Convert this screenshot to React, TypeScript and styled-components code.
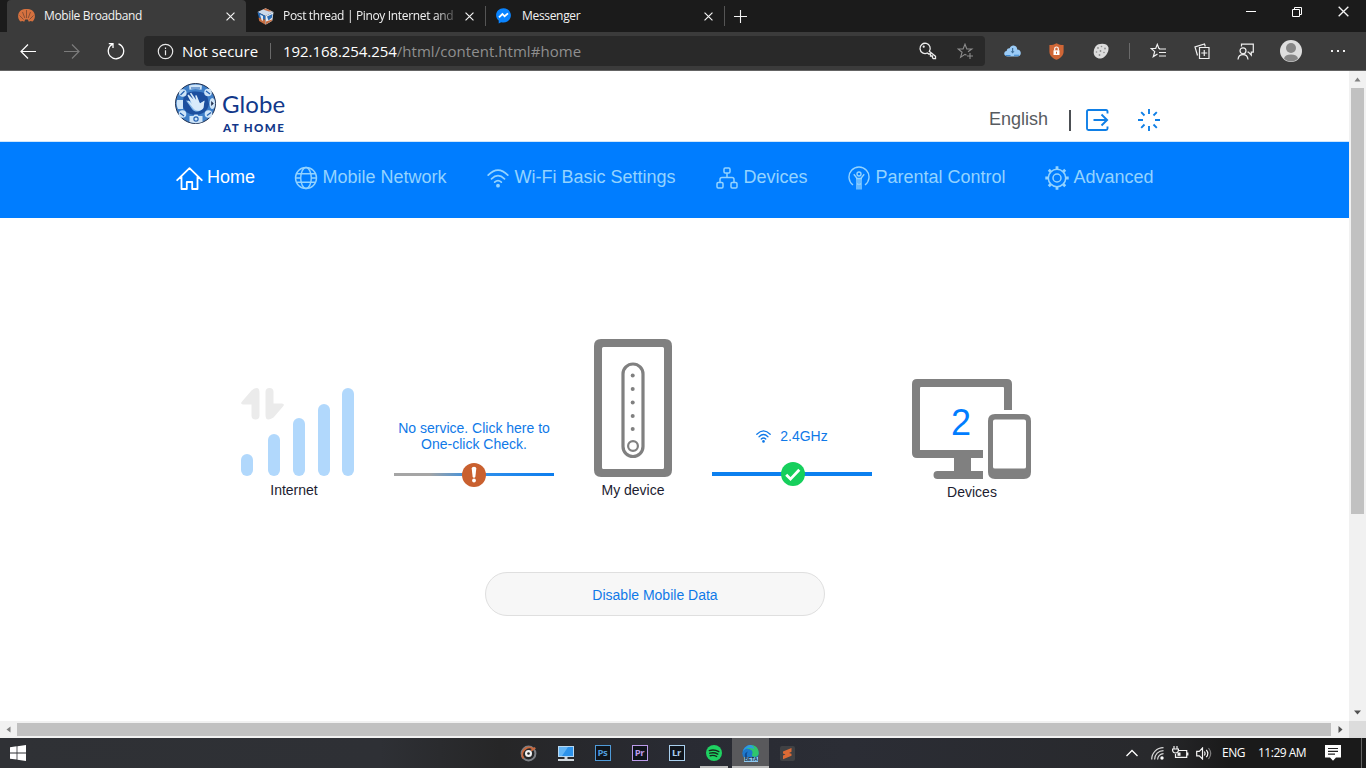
import React from "react";
import styled, { createGlobalStyle } from "styled-components";

const UI = `"Open Sans", "Noto Sans", sans-serif`;
const ARIAL = `"Liberation Sans", Arial, sans-serif`;

const GlobalStyle = createGlobalStyle`
  * { box-sizing: border-box; }
  body { margin: 0; overflow: hidden; background: #fff; }
  svg { display: block; flex: none; }
`;

const Screen = styled.div`
  width: 1366px;
  height: 768px;
  display: flex;
  flex-direction: column;
  overflow: hidden;
  font-family: ${ARIAL};
`;

/* ---------- browser chrome ---------- */

const TabStrip = styled.div`
  height: 32px;
  flex: none;
  display: flex;
  background: #1b1b1b;
  padding-left: 7px;
`;

const TabBox = styled.div<{ $active?: boolean }>`
  width: 239px;
  height: 32px;
  display: flex;
  align-items: center;
  padding: 0 8px 0 11px;
  background: ${(p) => (p.$active ? "#3b3b3b" : "transparent")};
  border-radius: 4px 4px 0 0;
`;

const Favicon = styled.div`
  width: 26px;
  flex: none;
`;

const TabTitle = styled.div<{ $spacing: number; $fade?: boolean }>`
  width: 172px;
  white-space: nowrap;
  font: 12px/20px ${UI};
  letter-spacing: ${(p) => p.$spacing}px;
  color: #f2f2f2;
  mask-image: ${(p) => (p.$fade ? "linear-gradient(90deg, #000 152px, rgba(0,0,0,.2) 172px)" : "none")};
`;

const TabClose = styled.div`
  margin-left: auto;
  width: 16px;
  display: flex;
  justify-content: center;
`;

const TabDivider = styled.div`
  width: 1px;
  height: 20px;
  margin: 6px -1px 0 0;
  background: #555;
`;

const NewTab = styled.div`
  width: 33px;
  display: flex;
  align-items: center;
  justify-content: center;
`;

const WindowButtons = styled.div`
  margin-left: auto;
  height: 23px;
  display: flex;
`;

const Slot = styled.div<{ $w: number }>`
  width: ${(p) => p.$w}px;
  flex: none;
  display: flex;
  align-items: center;
  justify-content: center;
`;

const Toolbar = styled.div`
  height: 39px;
  flex: none;
  display: flex;
  align-items: stretch;
  background: #3b3b3b;
  border-bottom: 1px solid #646464;
  padding-left: 6px;
`;

const AddressBar = styled.div`
  width: 841px;
  height: 30px;
  margin: 4px 6px 0 6px;
  flex: none;
  display: flex;
  align-items: center;
  background: #292929;
  border-radius: 4px;
  padding-left: 13px;
  font: 15px/28px ${UI};
  color: #fff;
  white-space: nowrap;
`;

const SecurityText = styled.div`
  width: 80px;
  margin-left: 8px;
`;

const ToolbarDivider = styled.div`
  width: 1px;
  height: 16px;
  background: #6a6a6a;
`;

const Url = styled.div`
  flex: 1;
  margin-left: 4px;
  letter-spacing: -0.07px;
  span { color: #8f8f8f; letter-spacing: 0.05px; }
`;

/* ---------- page viewport ---------- */

const Viewport = styled.div`
  flex: 1;
  min-height: 0;
  display: grid;
  grid-template-columns: 1349px 17px;
  grid-template-rows: 650px 17px;
`;

const Page = styled.div`
  display: flex;
  flex-direction: column;
  background: #fff;
  overflow: hidden;
`;

const ScrollV = styled.div`
  background: #f1f1f1;
  display: flex;
  flex-direction: column;
  align-items: center;
`;

const ScrollH = styled.div`
  background: #f1f1f1;
  display: flex;
  align-items: center;
`;

const Corner = styled.div`
  background: #dcdcdc;
`;

const ScrollArrow = styled.div`
  width: 17px;
  height: 17px;
  display: flex;
  align-items: center;
  justify-content: center;
`;

const ThumbV = styled.div`
  width: 13px;
  height: 426px;
  margin-bottom: auto;
  background: #c1c1c1;
`;

const ThumbH = styled.div`
  width: 1314px;
  height: 13px;
  margin-right: auto;
  background: #c1c1c1;
`;

const Header = styled.header`
  height: 71px;
  flex: none;
  display: flex;
  padding: 12px 189px 0 175px;
  border-bottom: 1px solid #cfe6fb;
`;

const Wordmark = styled.div`
  margin: 7px 0 0 6px;
  color: #12388a;
  font-family: Lato, sans-serif;
  white-space: nowrap;
`;

const BrandName = styled.div`
  font-size: 24px;
  line-height: 28px;
  letter-spacing: 0.1px;
  font-weight: 400;
`;

const BrandSub = styled.div`
  margin-top: 2px;
  padding-left: 1px;
  font-size: 11.5px;
  line-height: 16px;
  font-weight: 900;
  letter-spacing: 1.4px;
`;

const HeaderTools = styled.div`
  margin: 26px 0 0 auto;
  height: 22px;
  display: flex;
  align-items: center;
`;

const Language = styled.div`
  font-size: 18px;
  line-height: 20px;
  color: #575b60;
  margin: -2px 21px 0 0;
`;

const HeaderDivider = styled.div`
  width: 2px;
  height: 21px;
  margin-right: 15px;
  background: #4c4f54;
`;

const LogoutWrap = styled.div`
  margin-right: 29px;
`;

const Nav = styled.nav`
  height: 76px;
  flex: none;
  display: flex;
  background: #007dff;
  padding-left: 176px;
`;

const NavItem = styled.div<{ $w: number; $active?: boolean }>`
  width: ${(p) => p.$w}px;
  height: 72px;
  display: flex;
  align-items: center;
  color: ${(p) => (p.$active ? "#fff" : "#93d3ff")};
`;

const NavText = styled.div<{ $gap: number }>`
  margin: -2px 0 0 ${(p) => p.$gap}px;
  font-size: 18px;
  line-height: 20px;
  white-space: nowrap;
`;

const Content = styled.main`
  flex: 1;
  display: flex;
  flex-direction: column;
`;

const StatusRow = styled.section`
  height: 283px;
  padding: 0 0 0 214px;
  display: flex;
  align-items: flex-end;
`;

const Station = styled.div<{ $w: number; $lift?: number }>`
  width: ${(p) => p.$w}px;
  margin-bottom: ${(p) => p.$lift ?? 0}px;
  display: flex;
  flex-direction: column;
  align-items: center;
`;

const StationLabel = styled.div<{ $gap: number }>`
  margin-top: ${(p) => p.$gap}px;
  font-size: 14px;
  line-height: 16px;
  color: #1c1c30;
`;

const SignalWrap = styled.div`
  padding-left: 8px;
`;

const DevicesArt = styled.div`
  position: relative;
  margin-right: 2px;
`;

const DeviceCount = styled.div`
  position: absolute;
  left: 0;
  top: 23px;
  width: 99px;
  text-align: center;
  font-size: 36px;
  line-height: 42px;
  color: #007dff;
`;

const Link = styled.div<{ $mx: string; $lift: number }>`
  width: 160px;
  margin: ${(p) => `0 ${p.$mx} ${p.$lift}px`};
  display: flex;
  flex-direction: column;
  align-items: center;
`;

const LinkText = styled.div<{ $gap: number }>`
  display: flex;
  align-items: center;
  gap: 9px;
  margin-bottom: ${(p) => p.$gap}px;
  font-size: 14px;
  line-height: 16px;
  text-align: center;
  white-space: nowrap;
  color: #0f79e8;
`;

const LinkLine = styled.div<{ $bg: string; $h: number }>`
  width: 160px;
  height: 24px;
  display: flex;
  justify-content: center;
  background: ${(p) => p.$bg} 0 10px / 100% ${(p) => p.$h}px no-repeat;
`;

const DataButton = styled.button`
  width: 340px;
  height: 44px;
  margin: 71px 0 0 485px;
  padding: 2px 0 0;
  border: 1px solid #dfdfdf;
  border-radius: 22px;
  background: #f7f7f7;
  font: 14px/16px ${ARIAL};
  color: #0f79e8;
`;

/* ---------- taskbar ---------- */

const Taskbar = styled.div`
  height: 30px;
  flex: none;
  display: flex;
  color: #fff;
  background: linear-gradient(90deg, #2f3135 0, #2e3035 380px, #262627 500px, #292b33 680px, #2b2d35 850px, #28292c 1150px, #1a1a1a 1230px, #1a1a1a 100%);
`;

const TaskItem = styled.div<{ $state?: "open" | "active" }>`
  width: 37px;
  height: 30px;
  display: flex;
  align-items: center;
  justify-content: center;
  background: ${(p) => (p.$state === "active" ? "#59595c" : "transparent")};
  background-image: ${(p) => (p.$state ? "linear-gradient(#bdbdbd, #bdbdbd)" : "none")};
  background-repeat: no-repeat;
  background-size: ${(p) => (p.$state === "active" ? "100% 2px" : "28px 2px")};
  background-position: bottom center;
`;

const StartButton = styled(TaskItem)`
  width: 36px;
  margin-right: 474px;
`;

const Tray = styled.div`
  margin-left: auto;
  width: 246px;
  display: flex;
  align-items: center;
`;

const TrayText = styled.div<{ $w: number; $spacing: number; $gap?: number }>`
  width: ${(p) => p.$w}px;
  margin-left: ${(p) => p.$gap ?? 0}px;
  flex: none;
  font: 12px/28px ${UI};
  letter-spacing: ${(p) => p.$spacing}px;
  white-space: nowrap;
`;

const DesktopEdge = styled.div`
  width: 1px;
  height: 30px;
  margin-left: 20px;
  background: #636363;
`;

/* ---------- drawings ---------- */

const stroke = (w = 1.2, color = "currentColor") => ({
  fill: "none",
  stroke: color,
  strokeWidth: w,
});

const Cross = ({ size = 9, w = 1.3 }: { size?: number; w?: number }) => (
  <svg width={size} height={size} viewBox="0 0 10 10" {...stroke(w, "#f4f4f4")}>
    <path d="M.6.6 9.4 9.4M9.4.6.6 9.4" />
  </svg>
);

const HuaweiIcon = () => (
  <svg width="17" height="14" viewBox="0 0 17 14">
    <path fill="#d5713f" d="M3 1.2C5.500 -.4 11.500 -.4 14 1.200c2 1.300 3 4 2.900 6.300-.1 2-.9 3.700-2.400 5l-2-.6-1.700.8-1-2.200h-2.600l-1 2.200-1.700-.8-2 .6C1 11.200.2 9.500.1 7.500 0 5.200 1 2.500 3 1.200z" />
    <path stroke="#55392e" strokeWidth=".6" fill="none" d="M8.500 9V1M6.800 9 4.500 3M10.200 9 12.500 3M5.500 10.500 1.500 6.500M11.500 10.500l4-4" />
  </svg>
);

const CubeIcon = () => (
  <svg width="17" height="17" viewBox="0 0 17 17">
    <path fill="#ccd9ea" d="M8.500.3 16.500 4 8.500 8 .5 4z" />
    <path fill="#c66e42" d="M6 1.500 9 .4l6 2.800-3 .4z" />
    <path fill="#276bb8" d="M.5 4l8 4v4L2 9.800z" />
    <path fill="#c66e42" d="m1.500 9.600 7 2.400v4.700l-6.300-3.700z" />
    <path fill="#dfe7f0" d="m3 6.500 3 1.400v5L4.500 12z" />
    <path fill="#e5ecf4" d="M16.500 4 8.500 8v8.700l6.800-4z" />
    <path fill="#2d6db5" d="m10 8.500 5.500-2.500-.5 3.500-3.500 3z" />
    <path fill="#c66e42" d="m9 13.500 6-2-.2 1.500L9 16.300z" />
  </svg>
);

const MessengerIcon = () => (
  <svg width="15" height="16" viewBox="0 0 15 16">
    <path fill="#0a84ff" d="M7.500.3C3.300.3.1 3.300.1 7.200c0 2.200 1 4 2.600 5.300v3.100l2.500-1.400c.7.200 1.500.3 2.300.3 4.200 0 7.400-3.200 7.400-7.200S11.700.3 7.500.3z" />
    <path fill="none" stroke="#fff" strokeWidth="1.800" d="M3 9.300 6.400 6l2.200 2.300L12 5.400" />
  </svg>
);

const KeyIcon = () => (
  <svg width="18" height="18" viewBox="0 0 18 18" {...stroke(1.3, "#ededed")}>
    <path d="M10.300 9.300A5.100 5.100 0 1 0 8.300 11l1.500 1h1.700v2h2v1.800l.8.900h2.200v-2.500z" />
    <circle cx="4.700" cy="4.700" r="1.100" fill="#ededed" stroke="none" />
  </svg>
);

const StarPlusIcon = () => (
  <svg width="17" height="17" viewBox="0 0 17 17" {...stroke(1.1, "#8d8d8d")}>
    <path d="M11 8.700 14.800 6h-5L8 1.200 6.100 6h-5l4 3.200-1.500 5L8 11.300l1.500 1M13 10v6M10 13h6" />
  </svg>
);

const CloudIcon = () => (
  <svg width="17" height="12" viewBox="0 0 17 12">
    <path fill="#9bcbf6" d="M3.600 11.500C1.500 11.500.2 10.300.2 8.600c0-1.500 1-2.500 2.400-2.700C3 3.500 4.600 3 5.700 3.300 6.500 1.300 8 .4 9.700.6c2.300.2 3.500 1.900 3.500 4 2.200.2 3.600 1.500 3.600 3.500 0 2-1.400 3.400-3.400 3.400z" />
    <path fill="#3f6f9b" d="M8 3h1.200v3.300h1.300L8.600 8.500 6.700 6.300H8z" />
    <path fill="#3b86cf" d="M1.500 10h5v1h-5zM10 9.700h5v1h-5z" />
  </svg>
);

const ShieldIcon = () => (
  <svg width="15" height="17" viewBox="0 0 15 17">
    <path fill="#cf6636" d="M7.500.2c2 1.200 4.500 1.900 7.100 1.900v6.400c0 4-3 6.900-7.100 8.300C3.400 15.400.4 12.500.4 8.500V2.100C3 2.100 5.500 1.400 7.500.2z" />
    <path fill="#fff" d="M4.500 7.300h6v4.700h-6z" />
    <path fill="none" stroke="#fff" strokeWidth="1.200" d="M5.700 7.500V5.800a1.800 1.800 0 0 1 3.600 0v1.700" />
    <path fill="#cf6636" d="M7 8.700h1v2H7z" />
  </svg>
);

const CookieIcon = () => (
  <svg width="16" height="16" viewBox="0 0 16 16">
    <path fill="#dcdcdc" d="M5.500 1.200C9 .1 14.500.3 15.400 4.500c.8 4-2.600 9.300-6.500 10.800C4.500 16.500.9 13.500.7 9.800.6 5.800 2.500 2.400 5.500 1.200z" />
    <g fill="#8e8e8e">
      <circle cx="5" cy="5" r=".9" /><circle cx="8.500" cy="3.500" r=".8" /><circle cx="12" cy="5.500" r=".9" />
      <circle cx="3.500" cy="9" r=".8" /><circle cx="7.500" cy="8" r=".9" /><circle cx="11" cy="9.500" r=".8" />
      <circle cx="6.500" cy="12" r=".9" />
    </g>
  </svg>
);

const FavoritesIcon = () => (
  <svg width="17" height="16" viewBox="0 0 17 16" {...stroke(1.2, "#f0f0f0")}>
    <path d="M10 5.500H8.900L7.300 1.400 5.700 5.500H1.200l3.500 3.100-1.400 5L7.500 11M9 6h7M9 9.500h7M9 13h7" />
  </svg>
);

const CollectionsIcon = () => (
  <svg width="16" height="17" viewBox="0 0 16 17" {...stroke(1.2, "#f0f0f0")}>
    <path d="M5.500 4.500h9.500v11H5.500zM10.250 7v6M7.250 10h6M3.500 12.500 1 3.800 10.500 1l.8 2.500" />
  </svg>
);

const FeedbackIcon = () => (
  <svg width="17" height="17" viewBox="0 0 17 17" {...stroke(1.2, "#f0f0f0")}>
    <path d="M4.500 3.500V1.200h11.800v8h-2v3L11.500 9.200h-1M1 16.500c.3-3 2-4.900 5-4.900s4.700 1.900 5 4.900" />
    <circle cx="6" cy="7.800" r="3" />
  </svg>
);

const AvatarIcon = () => (
  <svg width="22" height="22" viewBox="0 0 22 22">
    <circle cx="11" cy="11" r="11" fill="#dedede" />
    <circle cx="11" cy="8" r="5" fill="#878787" />
    <path fill="#878787" d="M4 18.500C4.500 15.700 7 14.500 11 14.500s6.500 1.200 7 4C16.200 20.500 13.800 21.500 11 21.500s-5.200-1-7-3z" />
  </svg>
);

const GlobeLogo = () => (
  <svg width="41" height="41" viewBox="0 0 41 41">
    <circle cx="20.500" cy="20.500" r="20" fill="#3f7fc8" stroke="#22304e" />
    <path fill="#1c4f9f" d="M9 12c4-4 17-5 23 0l2 9c-1 7-7 11-13.500 11S8 28 7.500 21z" />
    <g fill="#cfe5f8">
      <path d="M14 2.500c4-1.500 9-1.500 13 0l-.5 4.200c-4-1-8-1-12 0z" />
      <path d="M2 17h6v9H3C1.500 23 1.300 20 2 17z" />
      <circle cx="7.800" cy="10" r="3.800" /><circle cx="33" cy="9.500" r="3.800" />
      <circle cx="7.500" cy="31" r="3.800" /><circle cx="33.500" cy="31" r="3.800" />
      <path d="M14.500 33h4l1-1.500h3l1 1.500h4v6c-4 1.500-9 1.500-13 0z" />
      <ellipse cx="37.300" cy="20.500" rx="2.800" ry="5.500" />
    </g>
    <path fill="#8bbdec" d="M11 17.500 17 26c3 4 9 3 11-1l1.500-7-4 2z" />
    <path fill="#d9ebfa" d="m12.500 12.500 1-1 5 5-3.500-6 1.200-.7 5 7.200-1-4.500 1.400-.3L25 20.500l4.500-3-1 7.500c-2.500 3.500-8 3.500-10.500 0l-5.500-7 .8-.6 3.700 3.500z" />
    <g fill="none" stroke="#2461b2" strokeWidth="1.200">
      <circle cx="21" cy="36" r="2.100" /><path d="m5.500 12 4-4M31 8l4 3M5 30l4 3M32 32.500l4-3M16 5h9" />
    </g>
    <path fill="#22304e" d="m36.200 18 2.600 2.500-2.600 2.500z" />
  </svg>
);

const LogoutIcon = () => (
  <svg width="23" height="22" viewBox="0 0 23 22" {...stroke(1.9, "#0f7fe6")}>
    <path d="M21.500 4.500V2.500q0-1.500-1.500-1.500H2.500Q1 1 1 2.500v17Q1 21 2.500 21H20q1.500 0 1.500-1.500v-2M7.500 11h13.500M15.500 5.500l5.600 5.500-5.600 5.500" />
  </svg>
);

const SpinnerIcon = () => (
  <svg width="22" height="22" viewBox="0 0 22 22" {...stroke(1.9, "#0f7fe6")}>
    <path d="M11 0v5M11 17v5M0 11h5M17 11h5M3.200 3.200l3.300 3.300M15.500 15.500l3.300 3.300M18.800 3.200l-3.300 3.300M6.500 15.500l-3.300 3.300" />
  </svg>
);

const HomeIcon = () => (
  <svg width="27" height="23" viewBox="0 0 27 23" {...stroke(1.8)} strokeLinejoin="round" strokeLinecap="round">
    <path d="M1.200 13.200 13.500 1.200l12.300 12M5.500 10v12h5.300v-7h5.400v7h5.300V10" />
  </svg>
);

const WorldIcon = () => (
  <svg width="24" height="24" viewBox="0 0 24 24" {...stroke(1.4)}>
    <circle cx="12" cy="12" r="10.500" />
    <ellipse cx="12" cy="12" rx="5.300" ry="10.500" />
    <path d="M2.700 7.700h18.600M2.700 16.300h18.600M1.500 12h5.200M17.300 12h5.200" />
  </svg>
);

const WifiIcon = ({ w = 22, h = 19, s = 1.7 }: { w?: number; h?: number; s?: number }) => (
  <svg width={w} height={h} viewBox="0 0 22 19" {...stroke(s)} strokeLinecap="round">
    <path d="M1.200 6.200Q11-3.800 20.800 6.200M4.500 9.800q6.500-6.300 13 0M7.700 13.200q3.300-3 6.600 0" />
    <circle cx="11" cy="16.700" r="1.900" fill="currentColor" stroke="none" />
  </svg>
);

const TreeIcon = () => (
  <svg width="22" height="22" viewBox="0 0 22 22" {...stroke(1.5)}>
    <rect x="8" y="1" width="6" height="5" rx="1.200" />
    <rect x="1" y="15.500" width="6" height="5.500" rx="1.200" />
    <rect x="15" y="15.500" width="6" height="5.500" rx="1.200" />
    <path d="M11 6v4.500M4 15.500v-3q0-2 2-2h10q2 0 2 2v3" />
  </svg>
);

const ParentIcon = () => (
  <svg width="22" height="24" viewBox="0 0 22 24" {...stroke(1.4)}>
    <path d="M5 19A10 10 0 1 1 17 19" />
    <circle cx="11" cy="8" r="2" />
    <path d="m5.800 8.300 3.200 4v11.200M16.200 8.300 13 12.300v11.200M8 12.500h6M11 13v4M9 18h4M11 18v5.500" />
  </svg>
);

const GearIcon = () => (
  <svg width="24" height="24" viewBox="0 0 24 24" {...stroke(1.5)}>
    <circle cx="12" cy="12" r="8.700" />
    <circle cx="12" cy="12" r="4" />
    <path strokeWidth="2.800" d="M12 .3v2.700M12 21v2.700M.3 12H3M21 12h2.700M3.800 3.800l1.900 1.900M18.300 18.300l1.900 1.900M20.200 3.800l-1.900 1.900M5.700 18.300l-1.900 1.900" />
  </svg>
);

const SignalArt = () => (
  <svg width="114" height="88" viewBox="0 0 114 88">
    <path fill="#ebebeb" d="M10.500 2.500Q18.500-3.500 18.500 5v22.500a4 4 0 0 1-8 0V16.500H2q-3-.3-1.200-2.800zM24.500 4a4 4 0 0 1 8 0v11.500H41q3 .3 1.200 2.800L32.500 29.500q-8 5-8-2.500z" />
    <g fill="#b1d8fc">
      <rect x="0" y="66" width="12" height="22" rx="6" />
      <rect x="27" y="46" width="12" height="42" rx="6" />
      <rect x="52" y="30" width="12" height="58" rx="6" />
      <rect x="77" y="16" width="12" height="72" rx="6" />
      <rect x="101" y="0" width="12" height="88" rx="6" />
    </g>
  </svg>
);

const RouterArt = () => (
  <svg width="78" height="138" viewBox="0 0 78 138">
    <path fill="#808080" fillRule="evenodd" d="M7 0h64q7 0 7 7v124q0 7-7 7H7q-7 0-7-7V7Q0 0 7 0zM9.500 8Q8 8 8 9.500v119q0 1.500 1.500 1.500h59q1.500 0 1.500-1.500V9.500Q70 8 68.500 8z" />
    <rect x="29" y="25" width="20" height="92.500" rx="10" fill="none" stroke="#808080" strokeWidth="3.200" />
    <g fill="#808080">
      {[36.500, 50, 63.500, 77, 90].map((y) => (
        <circle key={y} cx="38.700" cy={y} r="2" />
      ))}
    </g>
    <circle cx="39" cy="107" r="4.900" fill="none" stroke="#808080" strokeWidth="2.200" />
  </svg>
);

const ScreensArt = () => (
  <svg width="119" height="100" viewBox="0 0 119 100" fill="#808080">
    <path d="M5 0h90q5 0 5 5v26h-8V9q0-1-1-1H9Q8 8 8 9v62h63v8H59v13h12v8H25.500a4 4 0 0 1 0-8H42V79H5q-5 0-5-5V5q0-5 5-5z" />
    <path fillRule="evenodd" d="M83 35h29q7 0 7 7v51q0 7-7 7H83q-7 0-7-7V42q0-7 7-7zM83 40.500q-2 0-2 2V88q0 1.500 2 1.500h29q2 0 2-1.500V42.500q0-2-2-2z" />
  </svg>
);

const WarnBadge = () => (
  <svg width="24" height="24" viewBox="0 0 24 24">
    <circle cx="12" cy="12" r="12" fill="#c9602f" />
    <path fill="#fff" d="M9.700 5.500q0-1.700 2.300-1.700t2.300 1.700l-.9 8q-.2 1.200-1.400 1.200t-1.400-1.200z" />
    <circle cx="12" cy="17.500" r="1.900" fill="#fff" />
  </svg>
);

const CheckBadge = () => (
  <svg width="26" height="24" viewBox="0 0 26 24">
    <circle cx="14" cy="12" r="12" fill="#16cf5c" />
    <path d="m7.200 12.800 4.300 4.300 8.800-9.300" fill="none" stroke="#fff" strokeWidth="2.800" />
  </svg>
);

const Triangle = ({ d, color = "#505050" }: { d: string; color?: string }) => (
  <svg width="9" height="9" viewBox="0 0 9 9" fill={color}>
    <path d={d} />
  </svg>
);

const WindowsIcon = () => (
  <svg width="16" height="16" viewBox="0 0 16 16" fill="#fff">
    <path d="M0 2.200 6.600 1.300v6.200H0zM7.400 1.200 16 0v7.500H7.400zM0 8.400h6.600v6.200L0 13.700zM7.400 8.400H16V16l-8.600-1.300z" />
  </svg>
);

const DiscIcon = () => (
  <svg width="17" height="17" viewBox="0 0 17 17">
    <circle cx="8.500" cy="8.500" r="6.900" fill="none" stroke="#7d8086" strokeWidth="2" />
    <path d="M13.500 4A6.900 6.900 0 0 0 3.600 13.400M11 5.800l4.300-3" fill="none" stroke="#c8693f" strokeWidth="2" />
    <circle cx="8.500" cy="8.500" r="3.500" fill="#f2f2f2" />
    <circle cx="8.500" cy="8.500" r="1.300" fill="#222" />
  </svg>
);

const MonitorIcon = () => (
  <svg width="16" height="15" viewBox="0 0 16 15">
    <path fill="#b8d8f2" d="M0 0h16v11H0z" />
    <path fill="#2c92ea" d="M1 1h14v9H1z" />
    <path fill="#62b4f5" d="M1 1h9L4 10H1z" />
    <path fill="#cfd6dc" d="M6.500 11h3v2h-3zM0 13h16v2H0z" />
  </svg>
);

const AdobeTile = styled.div<{ $color: string }>`
  width: 16px;
  height: 16px;
  border: 1px solid ${(p) => p.$color};
  background: #10151c;
  color: ${(p) => p.$color};
  font: 700 9.5px/13px ${UI};
  letter-spacing: -0.3px;
  text-align: center;
`;

const SpotifyIcon = () => (
  <svg width="16" height="16" viewBox="0 0 16 16">
    <circle cx="8" cy="8" r="8" fill="#1fd262" />
    <path d="M3.300 5.600q5-1.500 9.500 1M3.800 8.200q4.300-1.200 8 .9M4.200 10.700q3.600-.9 6.500.8" fill="none" stroke="#172a1d" strokeWidth="1.400" strokeLinecap="round" />
  </svg>
);

const BetaText = styled.div`
  position: absolute;
  left: 2px;
  bottom: 0;
  width: 14px;
  height: 5px;
  background: #8ec7ee;
  color: #102a44;
  font: 700 5px/5px ${ARIAL};
  text-align: center;
`;

const EdgeWrap = styled.div`
  position: relative;
  width: 17px;
`;

const EdgeIcon = () => (
  <EdgeWrap>
    <svg width="17" height="17" viewBox="0 0 17 17">
      <circle cx="8.500" cy="8.300" r="8.200" fill="#1d78cb" />
      <path fill="#2fc66d" d="M9 .1c5 .2 8 4 7.700 8.300-.3 2.400-2 3.400-4.500 3.400-2 0-2.600-1-2-2.500C11.500 6 9 3.500 5 4 5.500 1.500 7 .2 9 .1z" />
      <path fill="#2f9be0" d="M1 6C2.500 1.800 6 0 9 .1 11 1 12 2.500 12.300 4 8 2 4 3 1 6z" />
      <path fill="#114c93" d="M6 6.500C4.500 8 4.300 11 6 13H3.500C2 9.500 3 7.500 6 6.500z" />
    </svg>
    <BetaText>BETA</BetaText>
  </EdgeWrap>
);

const SublimeIcon = () => (
  <svg width="15" height="15" viewBox="0 0 15 15">
    <rect width="15" height="15" rx="2" fill="#404144" />
    <path fill="#dc6a35" d="M3 5.500 11.500 2v3.700L9 7l2.500.8v2L3 13.200V9.500L5.500 8.400 3 7.600z" />
  </svg>
);

const TrayWifi = () => (
  <svg width="13" height="13" viewBox="0 0 13 13" {...stroke(1.2, "#dcdcdc")}>
    <path d="M.7 12.500C.7 5.800 5.800.7 12.500.7M3.600 12.500c0-5 3.900-8.900 8.900-8.900M6.600 12.500c0-3.300 2.600-5.900 5.900-5.900" />
    <circle cx="11" cy="11" r="1.700" fill="#fff" stroke="none" />
  </svg>
);

const BatteryIcon = () => (
  <svg width="17" height="14" viewBox="0 0 17 14" {...stroke(1.2, "#f4f4f4")}>
    <path d="M6.500 4.500h8.200v6.800H3.500V8M15.800 6.500v3M2 0v3M5 0v3M.6 3h5.800v1.500Q6 7 3.500 7T.6 4.500z" />
    <path fill="#f4f4f4" stroke="none" d="M5.500 6.500h3v3.300h-3z" />
  </svg>
);

const SpeakerIcon = () => (
  <svg width="16" height="13" viewBox="0 0 16 13" {...stroke(1.2, "#f4f4f4")}>
    <path d="M.7 4.300h2.600L6.500 1v11L3.300 8.800H.7zM8.300 4.500q1.500 2 0 4M10.300 2.800q3 3.700 0 7.400" />
    <path stroke="#7d7d7d" d="M12.500 1q4.400 5.500 0 11" />
  </svg>
);

const NotificationIcon = () => (
  <svg width="16" height="16" viewBox="0 0 16 16">
    <path fill="#fff" d="M0 0h16v12.500h-5L8 15.700 5 12.500H0z" />
    <path stroke="#222" strokeWidth="1.200" d="M3 3.500h10M3 6.300h10M3 9.100h7" />
  </svg>
);

/* ---------- sections ---------- */

type TabProps = { icon: React.ReactNode; title: string; spacing: number; active?: boolean; fade?: boolean };

const Tab = ({ icon, title, spacing, active, fade }: TabProps) => (
  <TabBox $active={active}>
    <Favicon>{icon}</Favicon>
    <TabTitle $spacing={spacing} $fade={fade}>{title}</TabTitle>
    <TabClose><Cross /></TabClose>
  </TabBox>
);

const Browser = () => (
  <>
    <TabStrip>
      <Tab icon={<HuaweiIcon />} title="Mobile Broadband" spacing={-0.36} active />
      <Tab icon={<CubeIcon />} title="Post thread | Pinoy Internet and" spacing={-0.34} fade />
      <TabDivider />
      <Tab icon={<MessengerIcon />} title="Messenger" spacing={-0.32} />
      <TabDivider />
      <NewTab>
        <svg width="13" height="13" viewBox="0 0 13 13" {...stroke(1.1, "#f4f4f4")}><path d="M6.500 0v13M0 6.500h13" /></svg>
      </NewTab>
      <WindowButtons>
        <Slot $w={46}><svg width="10" height="2" viewBox="0 0 10 2"><path fill="#fff" d="M0 0h10v1H0z" /></svg></Slot>
        <Slot $w={46}>
          <svg width="10" height="10" viewBox="0 0 10 10" {...stroke(1, "#fff")}><path d="M.5 2.500h7v7h-7zM2.500 2.500v-2h7v7h-2" /></svg>
        </Slot>
        <Slot $w={46}><Cross size={11} w={1.200} /></Slot>
      </WindowButtons>
    </TabStrip>
    <Toolbar>
      <Slot $w={44}>
        <svg width="16" height="15" viewBox="0 0 16 15" {...stroke(1.2, "#fff")}><path d="M16 7.500H1M8 .5l-7 7 7 7" /></svg>
      </Slot>
      <Slot $w={44}>
        <svg width="16" height="15" viewBox="0 0 16 15" {...stroke(1.2, "#7b7b7b")}><path d="M0 7.500h15M8 .5l7 7-7 7" /></svg>
      </Slot>
      <Slot $w={44}>
        <svg width="18" height="18" viewBox="0 0 18 18" {...stroke(1.3, "#fff")}><path d="M11.500 1.800A7.700 7.700 0 1 1 5.500 2.200M1.800 1.600H6v4.300" /></svg>
      </Slot>
      <AddressBar>
        <svg width="17" height="17" viewBox="0 0 17 17" {...stroke(1.2, "#e8e8e8")}>
          <circle cx="8.500" cy="8.500" r="7.200" /><path d="M8.500 7.300v5M8.500 4.500v1.500" />
        </svg>
        <SecurityText>Not secure</SecurityText>
        <Slot $w={17}><ToolbarDivider /></Slot>
        <Url>192.168.254.254<span>/html/content.html#home</span></Url>
        <Slot $w={36}><KeyIcon /></Slot>
        <Slot $w={39}><StarPlusIcon /></Slot>
      </AddressBar>
      <Slot $w={43}><CloudIcon /></Slot>
      <Slot $w={44}><ShieldIcon /></Slot>
      <Slot $w={45}><CookieIcon /></Slot>
      <Slot $w={13}><ToolbarDivider /></Slot>
      <Slot $w={44}><FavoritesIcon /></Slot>
      <Slot $w={44}><CollectionsIcon /></Slot>
      <Slot $w={43}><FeedbackIcon /></Slot>
      <Slot $w={48}><AvatarIcon /></Slot>
      <Slot $w={46}>
        <svg width="14" height="2" viewBox="0 0 14 2" fill="#eee"><path d="M0 0h2v2H0zM6 0h2v2H6zM12 0h2v2h-2z" /></svg>
      </Slot>
    </Toolbar>
  </>
);

const navItems = [
  { label: "Home", icon: <HomeIcon />, width: 118, gap: 4, active: true },
  { label: "Mobile Network", icon: <WorldIcon />, width: 193, gap: 4.5 },
  { label: "Wi-Fi Basic Settings", icon: <WifiIcon />, width: 229, gap: 5.5 },
  { label: "Devices", icon: <TreeIcon />, width: 132, gap: 5.5 },
  { label: "Parental Control", icon: <ParentIcon />, width: 197, gap: 5.5 },
  { label: "Advanced", icon: <GearIcon />, width: 140, gap: 4.5 },
];

const RouterPage = () => (
  <Page>
    <Header>
      <GlobeLogo />
      <Wordmark>
        <BrandName>Globe</BrandName>
        <BrandSub>AT HOME</BrandSub>
      </Wordmark>
      <HeaderTools>
        <Language>English</Language>
        <HeaderDivider />
        <LogoutWrap><LogoutIcon /></LogoutWrap>
        <SpinnerIcon />
      </HeaderTools>
    </Header>
    <Nav>
      {navItems.map((item) => (
        <NavItem key={item.label} $w={item.width} $active={item.active}>
          {item.icon}
          <NavText $gap={item.gap}>{item.label}</NavText>
        </NavItem>
      ))}
    </Nav>
    <Content>
      <StatusRow>
        <Station $w={160} $lift={3}>
          <SignalWrap><SignalArt /></SignalWrap>
          <StationLabel $gap={6}>Internet</StationLabel>
        </Station>
        <Link $mx="20px" $lift={14}>
          <LinkText $gap={11}>No service. Click here to<br />One-click Check.</LinkText>
          <LinkLine $bg="linear-gradient(90deg, #a5a5a5 0 22%, #4f94d4 42%, #2b8deb 60%, #0c7dee)" $h={3}><WarnBadge /></LinkLine>
        </Link>
        <Station $w={118} $lift={3}>
          <RouterArt />
          <StationLabel $gap={5}>My device</StationLabel>
        </Station>
        <Link $mx="20px" $lift={15}>
          <LinkText $gap={18}><WifiIcon w={15} h={13} s={1.9} />2.4GHz</LinkText>
          <LinkLine $bg="linear-gradient(#0c80ef, #0c80ef)" $h={4}><CheckBadge /></LinkLine>
        </Link>
        <Station $w={160} $lift={1}>
          <DevicesArt>
            <ScreensArt />
            <DeviceCount>2</DeviceCount>
          </DevicesArt>
          <StationLabel $gap={5}>Devices</StationLabel>
        </Station>
      </StatusRow>
      <DataButton>Disable Mobile Data</DataButton>
    </Content>
  </Page>
);

export default function App() {
  return (
    <Screen>
      <GlobalStyle />
      <Browser />
      <Viewport>
        <RouterPage />
        <ScrollV>
          <ScrollArrow><Triangle d="M1.500 6.500h6l-3-4z" color="#808080" /></ScrollArrow>
          <ThumbV />
          <ScrollArrow><Triangle d="M1 2.500h7l-3.500 4z" /></ScrollArrow>
        </ScrollV>
        <ScrollH>
          <ScrollArrow><Triangle d="M6.500 1.500v6l-4-3z" color="#808080" /></ScrollArrow>
          <ThumbH />
          <ScrollArrow><Triangle d="M2.500 1v7l4-3.500z" /></ScrollArrow>
        </ScrollH>
        <Corner />
      </Viewport>
      <Taskbar>
        <StartButton><WindowsIcon /></StartButton>
        <TaskItem><DiscIcon /></TaskItem>
        <TaskItem><MonitorIcon /></TaskItem>
        <TaskItem><AdobeTile $color="#4f9bd9">Ps</AdobeTile></TaskItem>
        <TaskItem><AdobeTile $color="#bb9bea">Pr</AdobeTile></TaskItem>
        <TaskItem><AdobeTile $color="#a9cfee">Lr</AdobeTile></TaskItem>
        <TaskItem $state="open"><SpotifyIcon /></TaskItem>
        <TaskItem $state="active"><EdgeIcon /></TaskItem>
        <TaskItem><SublimeIcon /></TaskItem>
        <Tray>
          <Slot $w={24}>
            <svg width="12" height="8" viewBox="0 0 12 8" {...stroke(1.3, "#fff")}><path d="m.5 7 5.500-5.500L11.500 7" /></svg>
          </Slot>
          <Slot $w={26}><TrayWifi /></Slot>
          <Slot $w={21}><BatteryIcon /></Slot>
          <Slot $w={25}><SpeakerIcon /></Slot>
          <TrayText $w={36} $spacing={-0.5} $gap={6}>ENG</TrayText>
          <TrayText $w={67} $spacing={-0.5}>11:29 AM</TrayText>
          <NotificationIcon />
          <DesktopEdge />
        </Tray>
      </Taskbar>
    </Screen>
  );
}
